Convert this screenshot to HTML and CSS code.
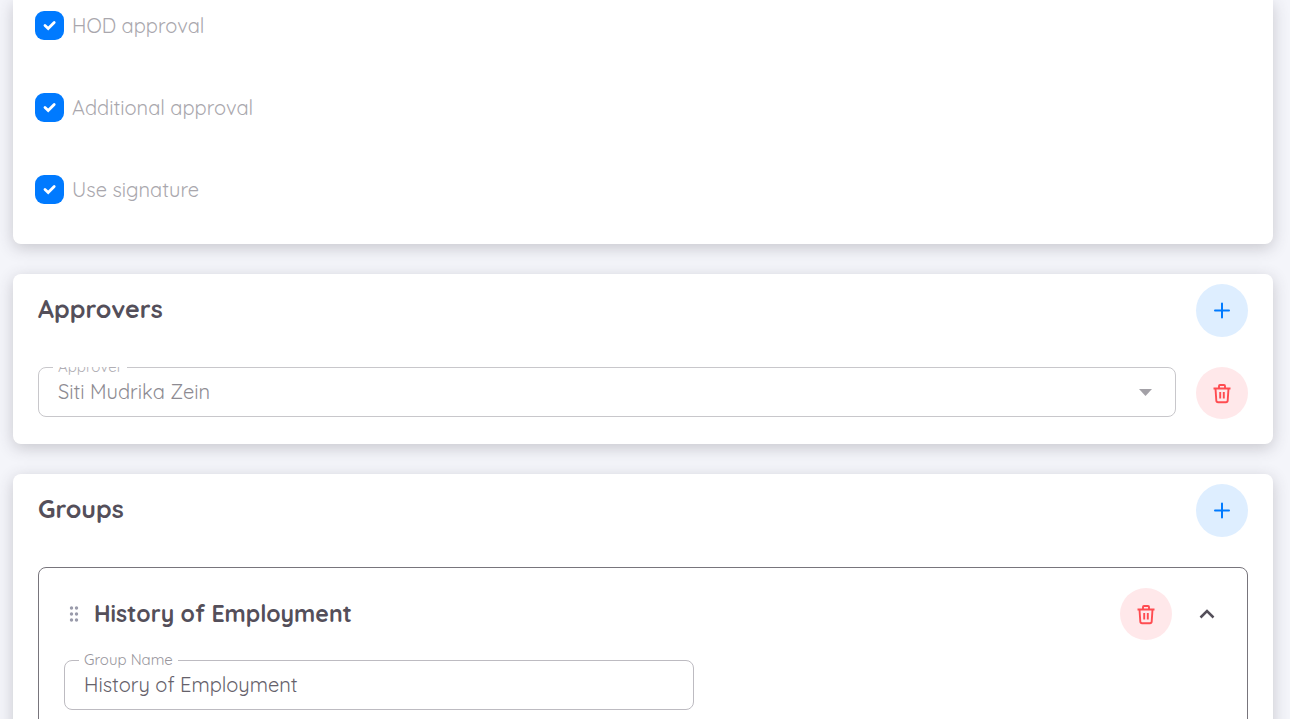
FILE: index.html
```
<!DOCTYPE html>
<html lang="en">
  <head>
    <title>Form Settings</title>
    <meta charset="utf-8" />
    <meta name="viewport" content="width=device-width, initial-scale=1" />

    <link rel="stylesheet" href="styles.css">
  </head>

  <body>
    <svg class="sprite" aria-hidden="true">
      <symbol id="plus" viewBox="0 0 24 24">
        <path d="M12 4.500v14M5 11.500h14" />
      </symbol>
      <symbol id="trash" viewBox="0 0 24 24">
        <path d="M3.500 7.500h17M5.500 7.500l.8 12a1.800 1.800 0 0 0 1.800 1.700h7.800a1.800 1.800 0 0 0 1.800-1.700l.8-12M9 7V5a1 1 0 0 1 1-1h4a1 1 0 0 1 1 1v2M10.200 11v6.500M13.800 11v6.500" />
      </symbol>
      <symbol id="chevron" viewBox="0 0 24 24">
        <path d="M5.500 15.500l6.500-6.500 6.500 6.500" />
      </symbol>
    </svg>

    <main class="page">
      <section class="card options">
        <label class="check"><input type="checkbox" checked disabled /> HOD approval</label>
        <label class="check"><input type="checkbox" checked disabled /> Additional approval</label>
        <label class="check"><input type="checkbox" checked disabled /> Use signature</label>
      </section>

      <section class="card">
        <header class="card-header">
          <h2>Approvers</h2>
          <button type="button" class="btn-round btn-add" aria-label="Add approver">
            <svg class="icon"><use href="#plus" /></svg>
          </button>
        </header>
        <div class="approver-row">
          <div class="field field-clipped">
            <label for="approver">Approver</label>
            <select id="approver" disabled>
              <option>Siti Mudrika Zein</option>
            </select>
          </div>
          <button type="button" class="btn-round btn-delete" aria-label="Remove approver">
            <svg class="icon"><use href="#trash" /></svg>
          </button>
        </div>
      </section>

      <section class="card">
        <header class="card-header">
          <h2>Groups</h2>
          <button type="button" class="btn-round btn-add" aria-label="Add group">
            <svg class="icon"><use href="#plus" /></svg>
          </button>
        </header>
        <div class="group">
          <div class="group-header">
            <svg class="drag" viewBox="0 0 20 20">
              <circle cx="7.500" cy="4" r="1.700" />
              <circle cx="12.500" cy="4" r="1.700" />
              <circle cx="7.500" cy="10" r="1.700" />
              <circle cx="12.500" cy="10" r="1.700" />
              <circle cx="7.500" cy="16" r="1.700" />
              <circle cx="12.500" cy="16" r="1.700" />
            </svg>
            <h3>History of Employment</h3>
            <button type="button" class="btn-round btn-delete" aria-label="Remove group">
              <svg class="icon"><use href="#trash" /></svg>
            </button>
            <button type="button" class="btn-toggle" aria-label="Collapse group">
              <svg class="icon"><use href="#chevron" /></svg>
            </button>
          </div>
          <div class="field group-name">
            <label for="groupName">Group Name</label>
            <input type="text" id="groupName" value="History of Employment" />
          </div>
        </div>
      </section>
    </main>
  </body>
</html>
```
FILE: styles.css
```
* {
  box-sizing: border-box;
}

body {
  margin: 0;
  height: 100vh;
  overflow: hidden;
  background: #f4f5fa;
  color: #544f5a;
  font-family: Quicksand, Lato, sans-serif;
  font-size: 20px;
}

h2,
h3 {
  margin: 0;
  color: #544f5a;
  font-weight: 700;
}

h2 {
  padding-bottom: 4px;
  font-size: 25px;
}

h3 {
  flex: 1;
  padding-bottom: 2px;
  font-size: 23px;
}

button {
  display: flex;
  flex-shrink: 0;
  align-items: center;
  justify-content: center;
  padding: 0;
  border: none;
  background: none;
  cursor: pointer;
}

.sprite {
  display: none;
}

.icon {
  width: 24px;
  height: 24px;
  fill: none;
  stroke: currentColor;
  stroke-width: 2;
}

.page {
  display: flex;
  flex-direction: column;
  gap: 30px;
  padding: 0 17px 30px 13px;
}

.card {
  padding: 10px 25px 25px;
  border-radius: 8px;
  background: #fff;
  box-shadow: 0 4px 16px rgba(58, 53, 65, 0.24);
}

.options {
  display: flex;
  flex-direction: column;
  align-items: flex-start;
  gap: 32px;
  padding: 0 22px 30px;
  border-radius: 0 0 8px 8px;
}

.check {
  display: flex;
  align-items: center;
  gap: 8px;
  height: 50px;
  color: #a9a7ad;
}

.check input {
  appearance: none;
  width: 29px;
  height: 29px;
  margin: 0;
  border-radius: 9px;
  background: #007aff
    url("data:image/svg+xml,%3Csvg xmlns='http://www.w3.org/2000/svg' viewBox='0 0 29 29'%3E%3Cpath d='M10 14.500l3.200 3 6-6' fill='none' stroke='white' stroke-width='2.800' stroke-linecap='round'/%3E%3C/svg%3E");
}

.card-header {
  display: flex;
  align-items: center;
  justify-content: space-between;
  margin-bottom: 30px;
}

.btn-round {
  width: 52px;
  height: 52px;
  border-radius: 50%;
}

.btn-add {
  height: 53px;
  background: #deeeff;
  color: #007aff;
}

.btn-add .icon {
  stroke-linecap: round;
}

.btn-delete {
  background: #ffe8ea;
  color: #ff4c51;
}

.btn-delete .icon {
  stroke-width: 1.9;
}

.btn-toggle {
  width: 30px;
  height: 30px;
  color: #544f5a;
}

.btn-toggle .icon {
  stroke-width: 2.5;
}

.approver-row {
  display: flex;
  gap: 20px;
}

.field {
  position: relative;
  flex: 1;
  height: 50px;
}

.field label {
  position: absolute;
  top: -10px;
  left: 15px;
  padding: 0 5px;
  background: #fff;
  color: #98969d;
  font-size: 15px;
  line-height: 20px;
}

.field-clipped {
  overflow: hidden;
}

.field input,
.field select {
  width: 100%;
  height: 50px;
  padding: 0 19px 2px;
  border: 1px solid #bdbbc1;
  border-radius: 8px;
  background: #fff;
  color: #65616a;
  font: inherit;
}

.field select {
  appearance: none;
  border-color: #c8c7cb;
  background: #fff
    url("data:image/svg+xml,%3Csvg xmlns='http://www.w3.org/2000/svg' viewBox='0 0 13 7'%3E%3Cpath d='M0 0h13l-6.500 7z' fill='%23a3a1a7'/%3E%3C/svg%3E")
    no-repeat right 23px center / 13px 7px;
  color: #8d8b92;
  opacity: 1;
}

.field-clipped label {
  color: #b0aeb4;
}

.group {
  padding: 20px 25px 25px;
  border: 1px solid #78757c;
  border-radius: 8px;
}

.group-header {
  display: flex;
  align-items: center;
  gap: 20px;
  margin-bottom: 20px;
}

.drag {
  width: 20px;
  height: 20px;
  margin-right: -10px;
  fill: #9a9bab;
}

.group-name {
  max-width: 630px;
}
```
